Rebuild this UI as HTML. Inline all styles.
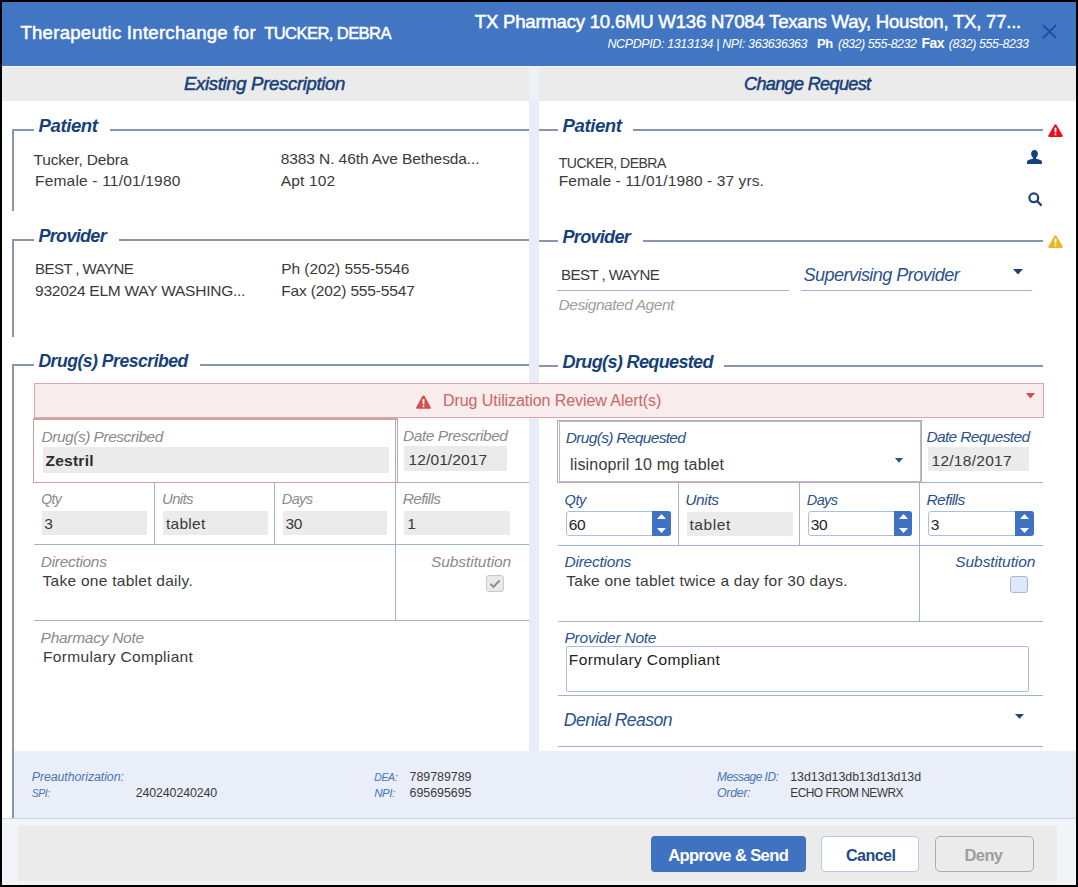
<!DOCTYPE html>
<html><head><meta charset="utf-8"><title>Therapeutic Interchange</title>
<style>
html,body{margin:0;padding:0;}
body{width:1078px;height:887px;background:#000;position:relative;overflow:hidden;font-family:"Liberation Sans",sans-serif;}
.b{position:absolute;box-sizing:border-box;}
.t{position:absolute;white-space:pre;font-family:"Liberation Sans",sans-serif;}
svg{position:absolute;overflow:visible;}
</style></head><body>
<!-- window -->
<div class="b" style="left:2px;top:2px;width:1074px;height:883px;background:#fff"></div>
<div class="b" style="left:2px;top:2px;width:1074px;height:64px;background:#4276c3"></div>
<div class="b" style="left:2px;top:66px;width:1074px;height:1px;background:#f4f7fc"></div>
<div class="b" style="left:2px;top:67px;width:1074px;height:34px;background:#ebebeb"></div>
<div class="b" style="left:529px;top:67px;width:10px;height:34px;background:#edf0f6"></div>
<div class="b" style="left:529px;top:101px;width:10px;height:650px;background:#e7ecf7"></div>
<!-- info band + footer -->
<div class="b" style="left:14px;top:751px;width:1062px;height:67px;background:#e9eef8"></div>
<div class="b" style="left:2px;top:818px;width:1074px;height:1px;background:#c9d1dc"></div>
<div class="b" style="left:2px;top:819px;width:1074px;height:66px;background:#f1f4f8"></div>
<div class="b" style="left:18px;top:826px;width:1039px;height:55px;background:#ebebeb"></div>
<!-- close X -->
<svg style="left:1042px;top:24px" width="15" height="15" viewBox="0 0 15 15"><path d="M1 1 L14 14 M14 1 L1 14" stroke="#1d4f9e" stroke-width="1.8" fill="none"/></svg>
<!-- left fieldsets -->
<div class="b" style="left:12px;top:129px;width:2px;height:82px;background:#8995ab"></div>
<div class="b" style="left:12px;top:129px;width:22px;height:2px;background:#8995ab"></div>
<div class="b" style="left:110px;top:129px;width:419px;height:2px;background:#8995ab"></div>
<div class="b" style="left:12px;top:239px;width:2px;height:98px;background:#8995ab"></div>
<div class="b" style="left:12px;top:239px;width:22px;height:2px;background:#8995ab"></div>
<div class="b" style="left:119px;top:239px;width:410px;height:2px;background:#8995ab"></div>
<div class="b" style="left:12px;top:364px;width:2px;height:454px;background:#8995ab"></div>
<div class="b" style="left:12px;top:364px;width:22px;height:2px;background:#8995ab"></div>
<div class="b" style="left:200px;top:364px;width:329px;height:2px;background:#8995ab"></div>
<!-- right fieldsets -->
<div class="b" style="left:539px;top:129px;width:19px;height:2px;background:#8995ab"></div>
<div class="b" style="left:633px;top:129px;width:410px;height:2px;background:#8995ab"></div>
<div class="b" style="left:539px;top:240px;width:19px;height:2px;background:#8995ab"></div>
<div class="b" style="left:643px;top:240px;width:400px;height:2px;background:#8995ab"></div>
<div class="b" style="left:539px;top:365px;width:19px;height:2px;background:#8995ab"></div>
<div class="b" style="left:724px;top:365px;width:319px;height:2px;background:#8995ab"></div>
<!-- right icons -->
<svg style="left:1048px;top:124px" width="15" height="13" viewBox="0 0 15 13"><path d="M7.5 0.3 Q8.2 0.3 8.6 1 L14.7 11.4 Q15.2 12.8 13.8 12.9 L1.2 12.9 Q-0.2 12.8 0.3 11.4 L6.4 1 Q6.8 0.3 7.5 0.3Z" fill="#e8111a"/><rect x="6.6" y="3.6" width="1.8" height="5" rx="0.5" fill="#fff"/><rect x="6.6" y="9.5" width="1.8" height="1.8" rx="0.5" fill="#fff"/></svg>
<svg style="left:1048px;top:235px" width="15" height="13" viewBox="0 0 15 13"><path d="M7.5 0.3 Q8.2 0.3 8.6 1 L14.7 11.4 Q15.2 12.8 13.8 12.9 L1.2 12.9 Q-0.2 12.8 0.3 11.4 L6.4 1 Q6.8 0.3 7.5 0.3Z" fill="#ecb822"/><rect x="6.6" y="3.6" width="1.8" height="5" rx="0.5" fill="#fff"/><rect x="6.6" y="9.5" width="1.8" height="1.8" rx="0.5" fill="#fff"/></svg>
<svg style="left:1027px;top:150px" width="15" height="14" viewBox="0 0 15 14"><path d="M7.5 0 C9.8 0 10.9 1.8 10.9 3.8 C10.9 5.6 10 7 9 7.6 L9 8.4 C10.5 9 13.6 9.6 14.6 10.8 C15 11.4 15 13 15 14 L0 14 C0 13 0 11.4 0.4 10.8 C1.4 9.6 4.5 9 6 8.4 L6 7.6 C5 7 4.1 5.6 4.1 3.8 C4.1 1.8 5.2 0 7.5 0Z" fill="#18427f"/></svg>
<svg style="left:1028px;top:192px" width="14" height="14" viewBox="0 0 14 14"><circle cx="5.8" cy="5.8" r="4.4" fill="none" stroke="#18427f" stroke-width="2.2"/><path d="M9.2 9.2 L13 13" stroke="#18427f" stroke-width="2.4" stroke-linecap="round"/></svg>
<!-- right provider -->
<div class="b" style="left:557px;top:290px;width:232px;height:1px;background:#a2b2cc"></div>
<div class="b" style="left:801px;top:290px;width:231px;height:1px;background:#a2b2cc"></div>
<svg style="left:1013px;top:269px" width="10" height="6" viewBox="0 0 10 6"><path d="M0 0 L10 0 L5 5.5Z" fill="#1f3f70"/></svg>
<!-- alert -->
<div class="b" style="left:34px;top:383px;width:1010px;height:35px;background:#f9ecec;border:1px solid #dba6ab"></div>
<svg style="left:416px;top:395px" width="15" height="14" viewBox="0 0 15 14"><path d="M7.5 0.4 Q8.2 0.4 8.6 1.1 L14.7 12.2 Q15.2 13.7 13.8 13.8 L1.2 13.8 Q-0.2 13.7 0.3 12.2 L6.4 1.1 Q6.8 0.4 7.5 0.4Z" fill="#d64b4f"/><rect x="6.6" y="4" width="1.8" height="5.2" rx="0.5" fill="#fff"/><rect x="6.6" y="10.3" width="1.8" height="1.9" rx="0.5" fill="#fff"/></svg>
<svg style="left:1025.5px;top:393px" width="9" height="6" viewBox="0 0 9 6"><path d="M0 0 L9 0 L4.5 5.4Z" fill="#d64b4f"/></svg>
<!-- left drug grid -->
<div class="b" style="left:33px;top:418px;width:365px;height:65px;background:#fff;border:1px solid #cfa0a6;border-top:2px solid #c9a3a8"></div>
<div class="b" style="left:43px;top:447px;width:346px;height:26px;background:#ebebeb"></div>
<div class="b" style="left:404px;top:446px;width:103px;height:25px;background:#ebebeb"></div>
<div class="b" style="left:395px;top:419px;width:1px;height:202px;background:#a2b2cc"></div>
<div class="b" style="left:398px;top:482px;width:131px;height:1px;background:#a2b2cc"></div>
<div class="b" style="left:154px;top:483px;width:1px;height:62px;background:#a2b2cc"></div>
<div class="b" style="left:274px;top:483px;width:1px;height:62px;background:#a2b2cc"></div>
<div class="b" style="left:34px;top:544px;width:495px;height:1px;background:#a2b2cc"></div>
<div class="b" style="left:34px;top:620px;width:495px;height:1px;background:#a2b2cc"></div>
<div class="b" style="left:42px;top:511px;width:105px;height:24px;background:#ebebeb"></div>
<div class="b" style="left:163px;top:511px;width:105px;height:24px;background:#ebebeb"></div>
<div class="b" style="left:283px;top:511px;width:104px;height:24px;background:#ebebeb"></div>
<div class="b" style="left:404px;top:511px;width:106px;height:24px;background:#ebebeb"></div>
<div class="b" style="left:486px;top:575px;width:18px;height:17px;background:#e9e9e9;border:1px solid #c9c9c9;border-radius:3px"></div>
<svg style="left:489px;top:578px" width="12" height="11" viewBox="0 0 12 11"><path d="M1.5 6 L4.5 9 L10.5 2.5" stroke="#8c8c8c" stroke-width="1.9" fill="none"/></svg>
<!-- right drug grid -->
<div class="b" style="left:557px;top:419.5px;width:365px;height:63.5px;background:#fff;border:1px solid #cfa0a6"></div>
<div class="b" style="left:558.5px;top:421px;width:362px;height:60.5px;border:1px solid #aebcd6"></div>
<svg style="left:894.5px;top:458px" width="8" height="5" viewBox="0 0 8 5"><path d="M0 0 L8 0 L4 4.8Z" fill="#2a4f8a"/></svg>
<div class="b" style="left:928px;top:447px;width:101px;height:24px;background:#ebebeb"></div>
<div class="b" style="left:921px;top:482px;width:122px;height:1px;background:#a2b2cc"></div>
<div class="b" style="left:678px;top:483px;width:1px;height:62px;background:#a2b2cc"></div>
<div class="b" style="left:799px;top:483px;width:1px;height:62px;background:#a2b2cc"></div>
<div class="b" style="left:919px;top:483px;width:1px;height:138px;background:#a2b2cc"></div>
<div class="b" style="left:558px;top:545px;width:485px;height:1px;background:#a2b2cc"></div>
<div class="b" style="left:558px;top:621px;width:485px;height:1px;background:#a2b2cc"></div>
<div class="b" style="left:558px;top:695px;width:485px;height:1px;background:#a2b2cc"></div>
<div class="b" style="left:558px;top:746px;width:485px;height:1px;background:#a2b2cc"></div>
<!-- spinners -->
<div class="b" style="left:566px;top:511px;width:105px;height:25px;background:#fff;border:1px solid #a9c0e2;border-radius:3px"></div>
<div class="b" style="left:652px;top:511px;width:19px;height:25px;background:#3f72c2;border-radius:0 3px 3px 0"></div>
<svg style="left:657px;top:514px" width="9" height="19" viewBox="0 0 9 19"><path d="M0 5 L4.5 0 L9 5Z M0 14 L9 14 L4.5 19Z" fill="#fff"/></svg>
<div class="b" style="left:687px;top:512px;width:106px;height:24px;background:#ebebeb"></div>
<div class="b" style="left:808px;top:511px;width:104px;height:25px;background:#fff;border:1px solid #a9c0e2;border-radius:3px"></div>
<div class="b" style="left:894px;top:511px;width:18px;height:25px;background:#3f72c2;border-radius:0 3px 3px 0"></div>
<svg style="left:898.5px;top:514px" width="9" height="19" viewBox="0 0 9 19"><path d="M0 5 L4.5 0 L9 5Z M0 14 L9 14 L4.5 19Z" fill="#fff"/></svg>
<div class="b" style="left:928px;top:511px;width:106px;height:25px;background:#fff;border:1px solid #a9c0e2;border-radius:3px"></div>
<div class="b" style="left:1015px;top:511px;width:19px;height:25px;background:#3f72c2;border-radius:0 3px 3px 0"></div>
<svg style="left:1020px;top:514px" width="9" height="19" viewBox="0 0 9 19"><path d="M0 5 L4.5 0 L9 5Z M0 14 L9 14 L4.5 19Z" fill="#fff"/></svg>
<div class="b" style="left:1010px;top:576px;width:18px;height:17px;background:#dfe8f7;border:1px solid #a4b8dc;border-radius:3px"></div>
<div class="b" style="left:566px;top:646px;width:463px;height:46px;background:#fff;border:1px solid #a9c0e2;border-radius:2px"></div>
<svg style="left:1014.5px;top:714.3px" width="9" height="5" viewBox="0 0 9 5"><path d="M0 0 L9 0 L4.5 4.8Z" fill="#263f78"/></svg>
<!-- buttons -->
<div class="b" style="left:651px;top:836px;width:155px;height:36px;background:#3f73c1;border-radius:4px"></div>
<div class="b" style="left:821px;top:836px;width:98px;height:36px;background:#fff;border:1px solid #b5c9ea;border-radius:4px"></div>
<div class="b" style="left:935px;top:836px;width:99px;height:36px;background:#ebebeb;border:1px solid #adadad;border-radius:5px"></div>

<span class="t" style="left:20.40px;top:22.00px;font-size:18.63px;line-height:21px;color:#fff;letter-spacing:0.253px;-webkit-text-stroke:0.5px #fff;">Therapeutic Interchange for</span>
<span class="t" style="left:264.20px;top:24.00px;font-size:16.59px;line-height:19px;color:#fff;letter-spacing:-0.598px;-webkit-text-stroke:0.5px #fff;">TUCKER, DEBRA</span>
<span class="t" style="left:474.80px;top:11.00px;font-size:18.63px;line-height:21px;color:#fff;letter-spacing:-0.245px;-webkit-text-stroke:0.5px #fff;">TX Pharmacy 10.6MU W136 N7084 Texans Way, Houston, TX, 77...</span>
<span class="t" style="left:607.50px;top:37.00px;font-size:12.42px;line-height:14px;color:#fff;letter-spacing:-0.339px;font-style:italic;">NCPDPID: 1313134 | NPI: 363636363</span>
<span class="t" style="left:817.00px;top:36.00px;font-size:12.99px;line-height:15px;color:#fff;letter-spacing:-0.487px;font-weight:700;">Ph</span>
<span class="t" style="left:838.00px;top:37.00px;font-size:12.42px;line-height:14px;color:#fff;letter-spacing:-0.458px;font-style:italic;">(832) 555-8232</span>
<span class="t" style="left:921.60px;top:35.00px;font-size:13.99px;line-height:16px;color:#fff;letter-spacing:-0.591px;font-weight:700;">Fax</span>
<span class="t" style="left:948.80px;top:37.00px;font-size:12.42px;line-height:14px;color:#fff;letter-spacing:-0.366px;font-style:italic;">(832) 555-8233</span>
<span class="t" style="left:184.00px;top:73.00px;font-size:18.63px;line-height:21px;color:#173f7a;letter-spacing:-0.358px;font-style:italic;-webkit-text-stroke:0.5px #173f7a;">Existing Prescription</span>
<span class="t" style="left:744.00px;top:74.00px;font-size:18.13px;line-height:20px;color:#173f7a;letter-spacing:-0.680px;font-style:italic;-webkit-text-stroke:0.5px #173f7a;">Change Request</span>
<span class="t" style="left:38.60px;top:115.00px;font-size:18.63px;line-height:21px;color:#173f7a;letter-spacing:-0.441px;font-weight:700;font-style:italic;">Patient</span>
<span class="t" style="left:38.40px;top:226.00px;font-size:18.13px;line-height:20px;color:#173f7a;letter-spacing:-0.730px;font-weight:700;font-style:italic;">Provider</span>
<span class="t" style="left:38.40px;top:351.00px;font-size:17.63px;line-height:20px;color:#173f7a;letter-spacing:-0.504px;font-weight:700;font-style:italic;">Drug(s) Prescribed</span>
<span class="t" style="left:33.50px;top:151.00px;font-size:15.52px;line-height:17px;color:#3a3a3a;letter-spacing:-0.169px;">Tucker, Debra</span>
<span class="t" style="left:35.00px;top:172.00px;font-size:15.52px;line-height:17px;color:#3a3a3a;letter-spacing:0.184px;">Female - 11/01/1980</span>
<span class="t" style="left:280.80px;top:150.00px;font-size:15.52px;line-height:17px;color:#3a3a3a;letter-spacing:-0.104px;">8383 N. 46th Ave Bethesda...</span>
<span class="t" style="left:280.80px;top:172.00px;font-size:15.52px;line-height:17px;color:#3a3a3a;letter-spacing:0.155px;">Apt 102</span>
<span class="t" style="left:35.00px;top:259.50px;font-size:15.02px;line-height:17px;color:#3a3a3a;letter-spacing:-0.554px;">BEST , WAYNE</span>
<span class="t" style="left:35.00px;top:282.00px;font-size:15.52px;line-height:17px;color:#3a3a3a;letter-spacing:-0.251px;">932024 ELM WAY WASHING...</span>
<span class="t" style="left:281.30px;top:259.50px;font-size:15.52px;line-height:17px;color:#3a3a3a;letter-spacing:-0.082px;">Ph (202) 555-5546</span>
<span class="t" style="left:281.30px;top:282.00px;font-size:15.52px;line-height:17px;color:#3a3a3a;letter-spacing:-0.160px;">Fax (202) 555-5547</span>
<span class="t" style="left:443.00px;top:391.30px;font-size:16.04px;line-height:18px;color:#cd6468;letter-spacing:-0.082px;">Drug Utilization Review Alert(s)</span>
<span class="t" style="left:41.60px;top:428.00px;font-size:15.52px;line-height:17px;color:#8b8b8b;letter-spacing:-0.501px;font-style:italic;">Drug(s) Prescribed</span>
<span class="t" style="left:45.50px;top:452.00px;font-size:15.52px;line-height:17px;color:#2e2e2e;letter-spacing:0.240px;font-weight:700;">Zestril</span>
<span class="t" style="left:403.00px;top:427.00px;font-size:15.52px;line-height:17px;color:#8b8b8b;letter-spacing:-0.450px;font-style:italic;">Date Prescribed</span>
<span class="t" style="left:408.60px;top:451.30px;font-size:15.52px;line-height:17px;color:#3a3a3a;letter-spacing:0.089px;">12/01/2017</span>
<span class="t" style="left:41.30px;top:491.00px;font-size:14.02px;line-height:16px;color:#8b8b8b;letter-spacing:-0.616px;font-style:italic;">Qty</span>
<span class="t" style="left:44.30px;top:515.00px;font-size:15.52px;line-height:17px;color:#3a3a3a;">3</span>
<span class="t" style="left:162.00px;top:490.00px;font-size:15.02px;line-height:17px;color:#8b8b8b;letter-spacing:-0.699px;font-style:italic;">Units</span>
<span class="t" style="left:166.00px;top:515.00px;font-size:15.52px;line-height:17px;color:#3a3a3a;letter-spacing:0.250px;">tablet</span>
<span class="t" style="left:281.80px;top:491.00px;font-size:14.52px;line-height:16px;color:#8b8b8b;letter-spacing:-0.615px;font-style:italic;">Days</span>
<span class="t" style="left:285.50px;top:515.00px;font-size:15.52px;line-height:17px;color:#3a3a3a;letter-spacing:-0.272px;">30</span>
<span class="t" style="left:402.70px;top:490.00px;font-size:15.52px;line-height:17px;color:#8b8b8b;letter-spacing:-0.667px;font-style:italic;">Refills</span>
<span class="t" style="left:407.20px;top:515.00px;font-size:15.52px;line-height:17px;color:#3a3a3a;">1</span>
<span class="t" style="left:40.80px;top:553.00px;font-size:15.52px;line-height:17px;color:#8b8b8b;letter-spacing:-0.321px;font-style:italic;">Directions</span>
<span class="t" style="left:42.50px;top:571.70px;font-size:15.52px;line-height:17px;color:#3a3a3a;letter-spacing:0.267px;">Take one tablet daily.</span>
<span class="t" style="left:431.00px;top:553.00px;font-size:15.52px;line-height:17px;color:#8b8b8b;letter-spacing:-0.082px;font-style:italic;">Substitution</span>
<span class="t" style="left:40.60px;top:628.60px;font-size:15.52px;line-height:17px;color:#8b8b8b;letter-spacing:-0.291px;font-style:italic;">Pharmacy Note</span>
<span class="t" style="left:43.00px;top:648.00px;font-size:15.52px;line-height:17px;color:#3a3a3a;letter-spacing:0.326px;">Formulary Compliant</span>
<span class="t" style="left:562.60px;top:115.00px;font-size:18.63px;line-height:21px;color:#173f7a;letter-spacing:-0.458px;font-weight:700;font-style:italic;">Patient</span>
<span class="t" style="left:562.50px;top:227.00px;font-size:18.13px;line-height:20px;color:#173f7a;letter-spacing:-0.744px;font-weight:700;font-style:italic;">Provider</span>
<span class="t" style="left:562.60px;top:352.00px;font-size:18.13px;line-height:20px;color:#173f7a;letter-spacing:-0.689px;font-weight:700;font-style:italic;">Drug(s) Requested</span>
<span class="t" style="left:558.80px;top:155.00px;font-size:14.02px;line-height:16px;color:#3a3a3a;letter-spacing:-0.518px;">TUCKER, DEBRA</span>
<span class="t" style="left:558.80px;top:172.00px;font-size:15.52px;line-height:17px;color:#3a3a3a;letter-spacing:0.096px;">Female - 11/01/1980 - 37 yrs.</span>
<span class="t" style="left:561.00px;top:266.30px;font-size:15.059999999999999px;line-height:17px;color:#3a3a3a;letter-spacing:-0.561px;">BEST , WAYNE</span>
<span class="t" style="left:558.60px;top:296.00px;font-size:15.52px;line-height:17px;color:#9d9d9d;letter-spacing:-0.467px;font-style:italic;">Designated Agent</span>
<span class="t" style="left:803.50px;top:265.40px;font-size:18.13px;line-height:20px;color:#2a528c;letter-spacing:-0.573px;font-style:italic;">Supervising Provider</span>
<span class="t" style="left:565.80px;top:428.70px;font-size:15.52px;line-height:17px;color:#2a528c;letter-spacing:-0.686px;font-style:italic;">Drug(s) Requested</span>
<span class="t" style="left:570.00px;top:455.20px;font-size:16.04px;line-height:18px;color:#3a3a3a;letter-spacing:0.153px;">lisinopril 10 mg tablet</span>
<span class="t" style="left:926.40px;top:428.20px;font-size:15.52px;line-height:17px;color:#2a528c;letter-spacing:-0.653px;font-style:italic;">Date Requested</span>
<span class="t" style="left:931.50px;top:452.00px;font-size:15.52px;line-height:17px;color:#3a3a3a;letter-spacing:0.267px;">12/18/2017</span>
<span class="t" style="left:564.50px;top:492.00px;font-size:14.52px;line-height:16px;color:#2a528c;letter-spacing:-0.391px;font-style:italic;">Qty</span>
<span class="t" style="left:568.80px;top:515.60px;font-size:15.52px;line-height:17px;color:#222;letter-spacing:-0.472px;">60</span>
<span class="t" style="left:685.30px;top:491.00px;font-size:15.52px;line-height:17px;color:#2a528c;letter-spacing:-0.399px;font-style:italic;">Units</span>
<span class="t" style="left:689.50px;top:515.60px;font-size:15.52px;line-height:17px;color:#3a3a3a;letter-spacing:0.550px;">tablet</span>
<span class="t" style="left:806.80px;top:492.00px;font-size:14.52px;line-height:16px;color:#2a528c;letter-spacing:-0.615px;font-style:italic;">Days</span>
<span class="t" style="left:810.80px;top:515.60px;font-size:15.52px;line-height:17px;color:#222;letter-spacing:-0.472px;">30</span>
<span class="t" style="left:926.50px;top:491.00px;font-size:15.52px;line-height:17px;color:#2a528c;letter-spacing:-0.584px;font-style:italic;">Refills</span>
<span class="t" style="left:930.70px;top:515.60px;font-size:15.52px;line-height:17px;color:#222;">3</span>
<span class="t" style="left:564.50px;top:553.00px;font-size:15.52px;line-height:17px;color:#2a528c;letter-spacing:-0.243px;font-style:italic;">Directions</span>
<span class="t" style="left:566.30px;top:572.40px;font-size:15.52px;line-height:17px;color:#3a3a3a;letter-spacing:0.223px;">Take one tablet twice a day for 30 days.</span>
<span class="t" style="left:955.30px;top:553.00px;font-size:15.52px;line-height:17px;color:#2a528c;letter-spacing:-0.091px;font-style:italic;">Substitution</span>
<span class="t" style="left:564.50px;top:628.50px;font-size:15.52px;line-height:17px;color:#2a528c;letter-spacing:-0.239px;font-style:italic;">Provider Note</span>
<span class="t" style="left:568.80px;top:651.00px;font-size:15.52px;line-height:17px;color:#222;letter-spacing:0.392px;">Formulary Compliant</span>
<span class="t" style="left:563.80px;top:710.00px;font-size:17.63px;line-height:20px;color:#2a528c;letter-spacing:-0.568px;font-style:italic;">Denial Reason</span>
<span class="t" style="left:31.80px;top:770.00px;font-size:12.42px;line-height:14px;color:#4a74b6;letter-spacing:-0.106px;font-style:italic;">Preauthorization:</span>
<span class="t" style="left:31.80px;top:787.60px;font-size:10.42px;line-height:11px;color:#4a74b6;letter-spacing:-0.467px;font-style:italic;">SPI:</span>
<span class="t" style="left:135.70px;top:785.60px;font-size:12.42px;line-height:14px;color:#3a3a3a;letter-spacing:-0.115px;">240240240240</span>
<span class="t" style="left:374.30px;top:772.00px;font-size:10.42px;line-height:11px;color:#4a74b6;letter-spacing:-0.338px;font-style:italic;">DEA:</span>
<span class="t" style="left:409.60px;top:770.00px;font-size:12.42px;line-height:14px;color:#3a3a3a;letter-spacing:-0.025px;">789789789</span>
<span class="t" style="left:374.30px;top:786.60px;font-size:11.42px;line-height:12px;color:#4a74b6;letter-spacing:-0.465px;font-style:italic;">NPI:</span>
<span class="t" style="left:409.60px;top:785.60px;font-size:12.42px;line-height:14px;color:#3a3a3a;letter-spacing:-0.025px;">695695695</span>
<span class="t" style="left:717.00px;top:770.00px;font-size:11.92px;line-height:14px;color:#4a74b6;letter-spacing:-0.505px;font-style:italic;">Message ID:</span>
<span class="t" style="left:790.20px;top:770.00px;font-size:12.42px;line-height:14px;color:#3a3a3a;letter-spacing:-0.009px;">13d13d13db13d13d13d</span>
<span class="t" style="left:717.00px;top:785.60px;font-size:12.42px;line-height:14px;color:#4a74b6;letter-spacing:-0.275px;font-style:italic;">Order:</span>
<span class="t" style="left:790.20px;top:785.60px;font-size:11.92px;line-height:14px;color:#3a3a3a;letter-spacing:-0.503px;">ECHO FROM NEWRX</span>
<span class="t" style="left:668.20px;top:845.70px;font-size:16.56px;line-height:19px;color:#fff;letter-spacing:-0.624px;font-weight:700;">Approve &amp; Send</span>
<span class="t" style="left:846.00px;top:845.70px;font-size:16.06px;line-height:18px;color:#1f4a8a;letter-spacing:-0.539px;font-weight:700;">Cancel</span>
<span class="t" style="left:964.60px;top:845.70px;font-size:16.56px;line-height:19px;color:#9e9e9e;letter-spacing:-0.682px;font-weight:700;">Deny</span>
</body></html>
